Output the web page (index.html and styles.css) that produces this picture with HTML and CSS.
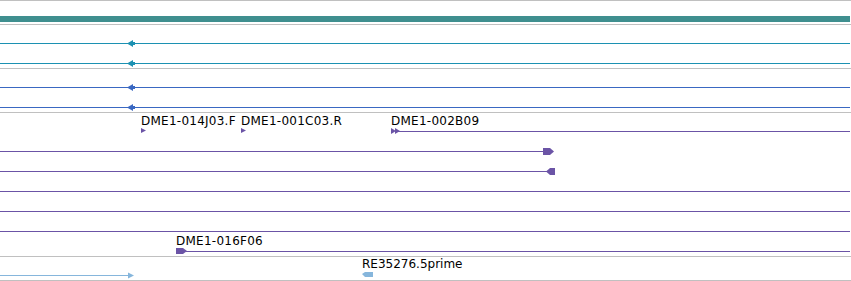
FILE: index.html
```html
<!DOCTYPE html>
<html lang="en">
<head>
    <meta charset="UTF-8">
    <meta name="viewport" content="width=device-width, initial-scale=1.0">
    <title>Tracks</title>
    <link rel="stylesheet" href="styles.css">
</head>
<body>
    <div class="panel">
        <!-- overview -->
        <div class="track track-top">
            <svg width="851" height="23">
                <rect class="teal-bar" x="0" y="15" width="850" height="6"/>
            </svg>
        </div>

        <!-- cDNA / teal -->
        <div class="track track-mid">
            <svg width="851" height="43">
                <g class="teal">
                    <rect x="0" y="18" width="850" height="1"/>
                    <polygon points="127,18.5 133,15 133,22"/>
                    <rect x="133" y="17" width="2" height="3"/>
                    <rect x="0" y="38" width="850" height="1"/>
                    <polygon points="127,38.5 133,35 133,42"/>
                    <rect x="133" y="37" width="2" height="3"/>
                </g>
            </svg>
        </div>

        <!-- blue -->
        <div class="track track-mid">
            <svg width="851" height="43">
                <g class="blue">
                    <rect x="0" y="18" width="850" height="1"/>
                    <polygon points="127,18.5 133,15 133,22"/>
                    <rect x="133" y="17" width="2" height="3"/>
                    <rect x="0" y="38" width="850" height="1"/>
                    <polygon points="127,38.5 133,35 133,42"/>
                    <rect x="133" y="37" width="2" height="3"/>
                </g>
            </svg>
        </div>

        <!-- BAC ends -->
        <div class="track track-big">
            <svg width="851" height="143">
                <text class="label" x="141" y="12">DME1-014J03.F</text>
                <text class="label" x="241" y="12">DME1-001C03.R</text>
                <text class="label" x="391" y="12">DME1-002B09</text>
                <text class="label" x="176" y="132">DME1-016F06</text>
                <g class="purple">
                    <polygon points="141,15 146,17.5 141,20"/>
                    <polygon points="241,15 246,17.5 241,20"/>

                    <polygon points="391,15 396,18 391,21"/>
                    <polygon points="395,15 400,18 395,21"/>
                    <rect x="398" y="18" width="452" height="1"/>

                    <rect x="0" y="38" width="544" height="1"/>
                    <rect x="543" y="35" width="7" height="7"/>
                    <polygon points="550,35 554,38.5 550,42"/>

                    <rect x="0" y="58" width="547" height="1"/>
                    <polygon points="546,58.5 550,55 550,62"/>
                    <rect x="550" y="55" width="5" height="7"/>

                    <rect x="0" y="78" width="850" height="1"/>
                    <rect x="0" y="98" width="850" height="1"/>
                    <rect x="0" y="118" width="850" height="1"/>

                    <rect x="176" y="135" width="7" height="6"/>
                    <polygon points="183,135 187,138 183,141"/>
                    <rect x="186" y="138" width="664" height="1"/>
                </g>
            </svg>
        </div>

        <!-- ESTs -->
        <div class="track track-top">
            <svg width="851" height="23">
                <text class="label label-tight" x="362" y="11">RE35276.5prime</text>
                <g class="light">
                    <rect x="0" y="18" width="130" height="1"/>
                    <polygon points="128,15.5 134,18.5 128,21.5"/>
                    <polygon points="362,17 365,15 373,15 373,20 365,20"/>
                </g>
            </svg>
        </div>
    </div>
</body>
</html>
```

FILE: styles.css
```css
body {
    margin: 0;
    background-color: #fff;
}

.panel {
    width: 851px;
}

.track {
    border-bottom: 1px solid #c0c0c0;
}

.track:first-child {
    border-top: 1px solid #c0c0c0;
}

.track svg {
    display: block;
    shape-rendering: crispEdges;
}

.track polygon {
    shape-rendering: auto;
}

.label {
    font-family: "DejaVu Sans", sans-serif;
    font-size: 12px;
    letter-spacing: 0.25px;
    fill: #000;
}

.label-tight {
    letter-spacing: 0;
}

.teal-bar {
    fill: #3f8f8f;
}

.teal {
    fill: #1c91b2;
}

.blue {
    fill: #3a68c2;
}

.purple {
    fill: #6b54a6;
}

.light {
    fill: #86b6dc;
}
```
